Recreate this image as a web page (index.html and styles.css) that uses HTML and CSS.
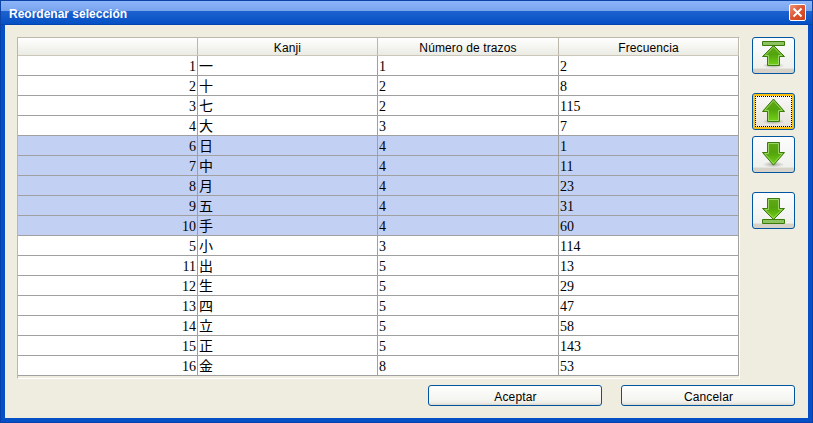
FILE: index.html
```html
<!DOCTYPE html>
<html lang="es">
<head>
<meta charset="utf-8">
<title>Reordenar selección</title>
<link rel="stylesheet" href="styles.css">
</head>
<body>
<svg class="defs" width="0" height="0" aria-hidden="true">
  <defs>
    <linearGradient id="green" x1="0" y1="0" x2="0" y2="1">
      <stop offset="0" stop-color="#62a818"/><stop offset=".45" stop-color="#52a40c"/><stop offset="1" stop-color="#73d216"/>
    </linearGradient>
    <radialGradient id="shade"><stop offset="0" stop-color="#000" stop-opacity=".3"/><stop offset="1" stop-color="#000" stop-opacity="0"/></radialGradient>
  </defs>
</svg>
<div class="window">
  <header class="titlebar">
    <h1>Reordenar selección</h1>
    <button class="close" aria-label="Cerrar"><svg width="15" height="15" viewBox="0 0 15 15"><path d="M3.5 3.5 11.5 11.5M11.5 3.5 3.5 11.5" stroke="#fff" stroke-width="2" fill="none"/></svg></button>
  </header>
  <main class="content">
    <div class="upper">
      <div class="scroll">
        <table>
          <colgroup><col class="c1"><col class="c2"><col class="c3"><col class="c4"></colgroup>
          <thead><tr><th></th><th>Kanji</th><th>Número de trazos</th><th>Frecuencia</th></tr></thead>
          <tbody>
            <tr><td>1</td><td>一</td><td>1</td><td>2</td></tr>
            <tr><td>2</td><td>十</td><td>2</td><td>8</td></tr>
            <tr><td>3</td><td>七</td><td>2</td><td>115</td></tr>
            <tr><td>4</td><td>大</td><td>3</td><td>7</td></tr>
            <tr class="selected"><td>6</td><td>日</td><td>4</td><td>1</td></tr>
            <tr class="selected"><td>7</td><td>中</td><td>4</td><td>11</td></tr>
            <tr class="selected"><td>8</td><td>月</td><td>4</td><td>23</td></tr>
            <tr class="selected"><td>9</td><td>五</td><td>4</td><td>31</td></tr>
            <tr class="selected"><td>10</td><td>手</td><td>4</td><td>60</td></tr>
            <tr><td>5</td><td>小</td><td>3</td><td>114</td></tr>
            <tr><td>11</td><td>出</td><td>5</td><td>13</td></tr>
            <tr><td>12</td><td>生</td><td>5</td><td>29</td></tr>
            <tr><td>13</td><td>四</td><td>5</td><td>47</td></tr>
            <tr><td>14</td><td>立</td><td>5</td><td>58</td></tr>
            <tr><td>15</td><td>正</td><td>5</td><td>143</td></tr>
            <tr><td>16</td><td>金</td><td>8</td><td>53</td></tr>
          </tbody>
        </table>
      </div>
      <nav class="movers">
        <button class="btn move" aria-label="Mover al principio"><svg width="43" height="37" viewBox="0 0 43 37"><ellipse cx="21.5" cy="28.5" rx="11" ry="3" fill="url(#shade)"/><path d="M10.5 4.5H32.5V8.5H10.5Z" fill="#8cc462" stroke="#3c7a0a"/><path d="M21.5 8.5 32.5 19.5H27.5V28.5H15.5V19.5H10.5Z" fill="url(#green)" stroke="#3c7a0a"/><path d="M21.5 10 30 18.5H26.5V27.5H16.5V18.5H13Z" fill="none" stroke="#a5dc74" stroke-opacity=".85"/></svg></button>
        <button class="btn move focused" aria-label="Subir"><svg width="43" height="37" viewBox="0 0 43 37"><ellipse cx="21.5" cy="28.5" rx="11" ry="3" fill="url(#shade)"/><path d="M21.5 6 32.5 18.5H27.5V28.5H15.5V18.5H10.5Z" fill="url(#green)" stroke="#3c7a0a"/><path d="M21.5 7.6 30.2 17.5H26.5V27.5H16.5V17.5H12.8Z" fill="none" stroke="#a5dc74" stroke-opacity=".85"/></svg></button>
        <button class="btn move" aria-label="Bajar"><svg width="43" height="37" viewBox="0 0 43 37"><ellipse cx="21.5" cy="28.5" rx="11" ry="3" fill="url(#shade)"/><path d="M21.5 29.2 32.5 16.5H27.5V6.5H15.5V16.5H10.5Z" fill="url(#green)" stroke="#3c7a0a"/><path d="M21.5 27.6 30.2 17.5H26.5V7.5H16.5V17.5H12.8Z" fill="none" stroke="#a5dc74" stroke-opacity=".85"/></svg></button>
        <button class="btn move" aria-label="Mover al final"><svg width="43" height="37" viewBox="0 0 43 37"><path d="M10.5 27.5H32.5V31.5H10.5Z" fill="#8cc462" stroke="#3c7a0a"/><path d="M21.5 27.5 32.5 16.5H27.5V6.5H15.5V16.5H10.5Z" fill="url(#green)" stroke="#3c7a0a"/><path d="M21.5 26 30 17.5H26.5V7.5H16.5V17.5H13Z" fill="none" stroke="#a5dc74" stroke-opacity=".85"/></svg></button>
      </nav>
    </div>
    <footer class="actions">
      <button class="btn">Aceptar</button>
      <button class="btn">Cancelar</button>
    </footer>
  </main>
</div>
</body>
</html>
```
FILE: styles.css
```css
* { box-sizing: border-box; }
body { margin: 0; font: 12px "Liberation Sans", Arial, sans-serif; color: #000; }
button { font: inherit; color: inherit; padding: 0; }
svg { display: block; }
.defs { position: absolute; }
.window {
  width: 813px; height: 423px; padding: 0 5px 5px;
  display: flex; flex-direction: column;
  background: #0450c4;
  box-shadow: inset 1px 0 #0441ac, inset -1px -1px #0441ac;
}
.titlebar {
  height: 25px; margin: 0 -5px; padding: 3px 6px 0 8px; flex: none;
  display: flex; justify-content: space-between; align-items: center;
  border: solid #0c44a8; border-width: 0 1px;
  background: linear-gradient(#0c44a8 0 1px, #8cb4f8 1px, #78a4ee 11px, #1e62d0 11px, #0450c4 24px, #0444ae 24px);
}
h1 { margin: 0; font: bold 12px/16px "Liberation Sans", Arial, sans-serif; color: #fff; }
.close {
  width: 17px; height: 17px; margin-top: -3px; border: 1px solid #fff; border-radius: 2px;
  background: linear-gradient(135deg, #ee9478, #dc5430 50%, #cc4018);
}
.content { flex: 1; padding: 12px 13px 12px 12px; background: #efede0; }
.upper { display: flex; justify-content: space-between; align-items: flex-start; }
.scroll {
  width: 723px; height: 342px;
  border: 1px solid #bbb7aa; border-right-color: #fff; border-bottom-color: #fff;
}
table { width: 721px; table-layout: fixed; border-collapse: separate; border-spacing: 0; }
.c1, .c2, .c4 { width: 180px; }
.c3 { width: 181px; }
th {
  height: 18px; padding: 2px 0 0; font-weight: normal; line-height: 14px; letter-spacing: .12px;
  background: linear-gradient(#fff, #ebebe4);
  border-right: 1px solid #bbb7aa; border-bottom: 1px solid #cbc8bb;
}
td {
  height: 20px; padding: 2px 1px 0; background: #fff;
  border-right: 1px solid #a0a0a0; border-bottom: 1px solid #a0a0a0;
  font: 14px/17px "Liberation Serif", "Noto Sans CJK JP", serif;
  vertical-align: top;
}
td:first-child { text-align: right; }
td:nth-child(2) { padding-top: 1px; font-family: "Noto Sans CJK JP", sans-serif; }
.selected td { background: #c2d0f3; }
.movers { display: grid; grid-template-rows: 56px 43px 56px 37px; }
.btn {
  border: 1px solid #0054a0; border-radius: 3px;
  background: linear-gradient(#fefefe, #f4f4f0 75%, #ecebe5 90%, #d8d4ca);
}
.move { width: 43px; height: 37px; background: linear-gradient(#fcfdff, #f0f0ec 85%, #d6d2c8 90%, #d6d2c8); }
.move svg { margin: -1px; }
.focused { box-shadow: inset 0 0 0 2px #fcc010; background: linear-gradient(#fafafa, #e6e1da); outline: 1px dotted #000; outline-offset: -4px; }
.actions { display: flex; justify-content: flex-end; gap: 19px; margin-top: 6px; }
.actions .btn { width: 174px; height: 21px; padding: 2px 0 0 1px; letter-spacing: .15px; }
```
